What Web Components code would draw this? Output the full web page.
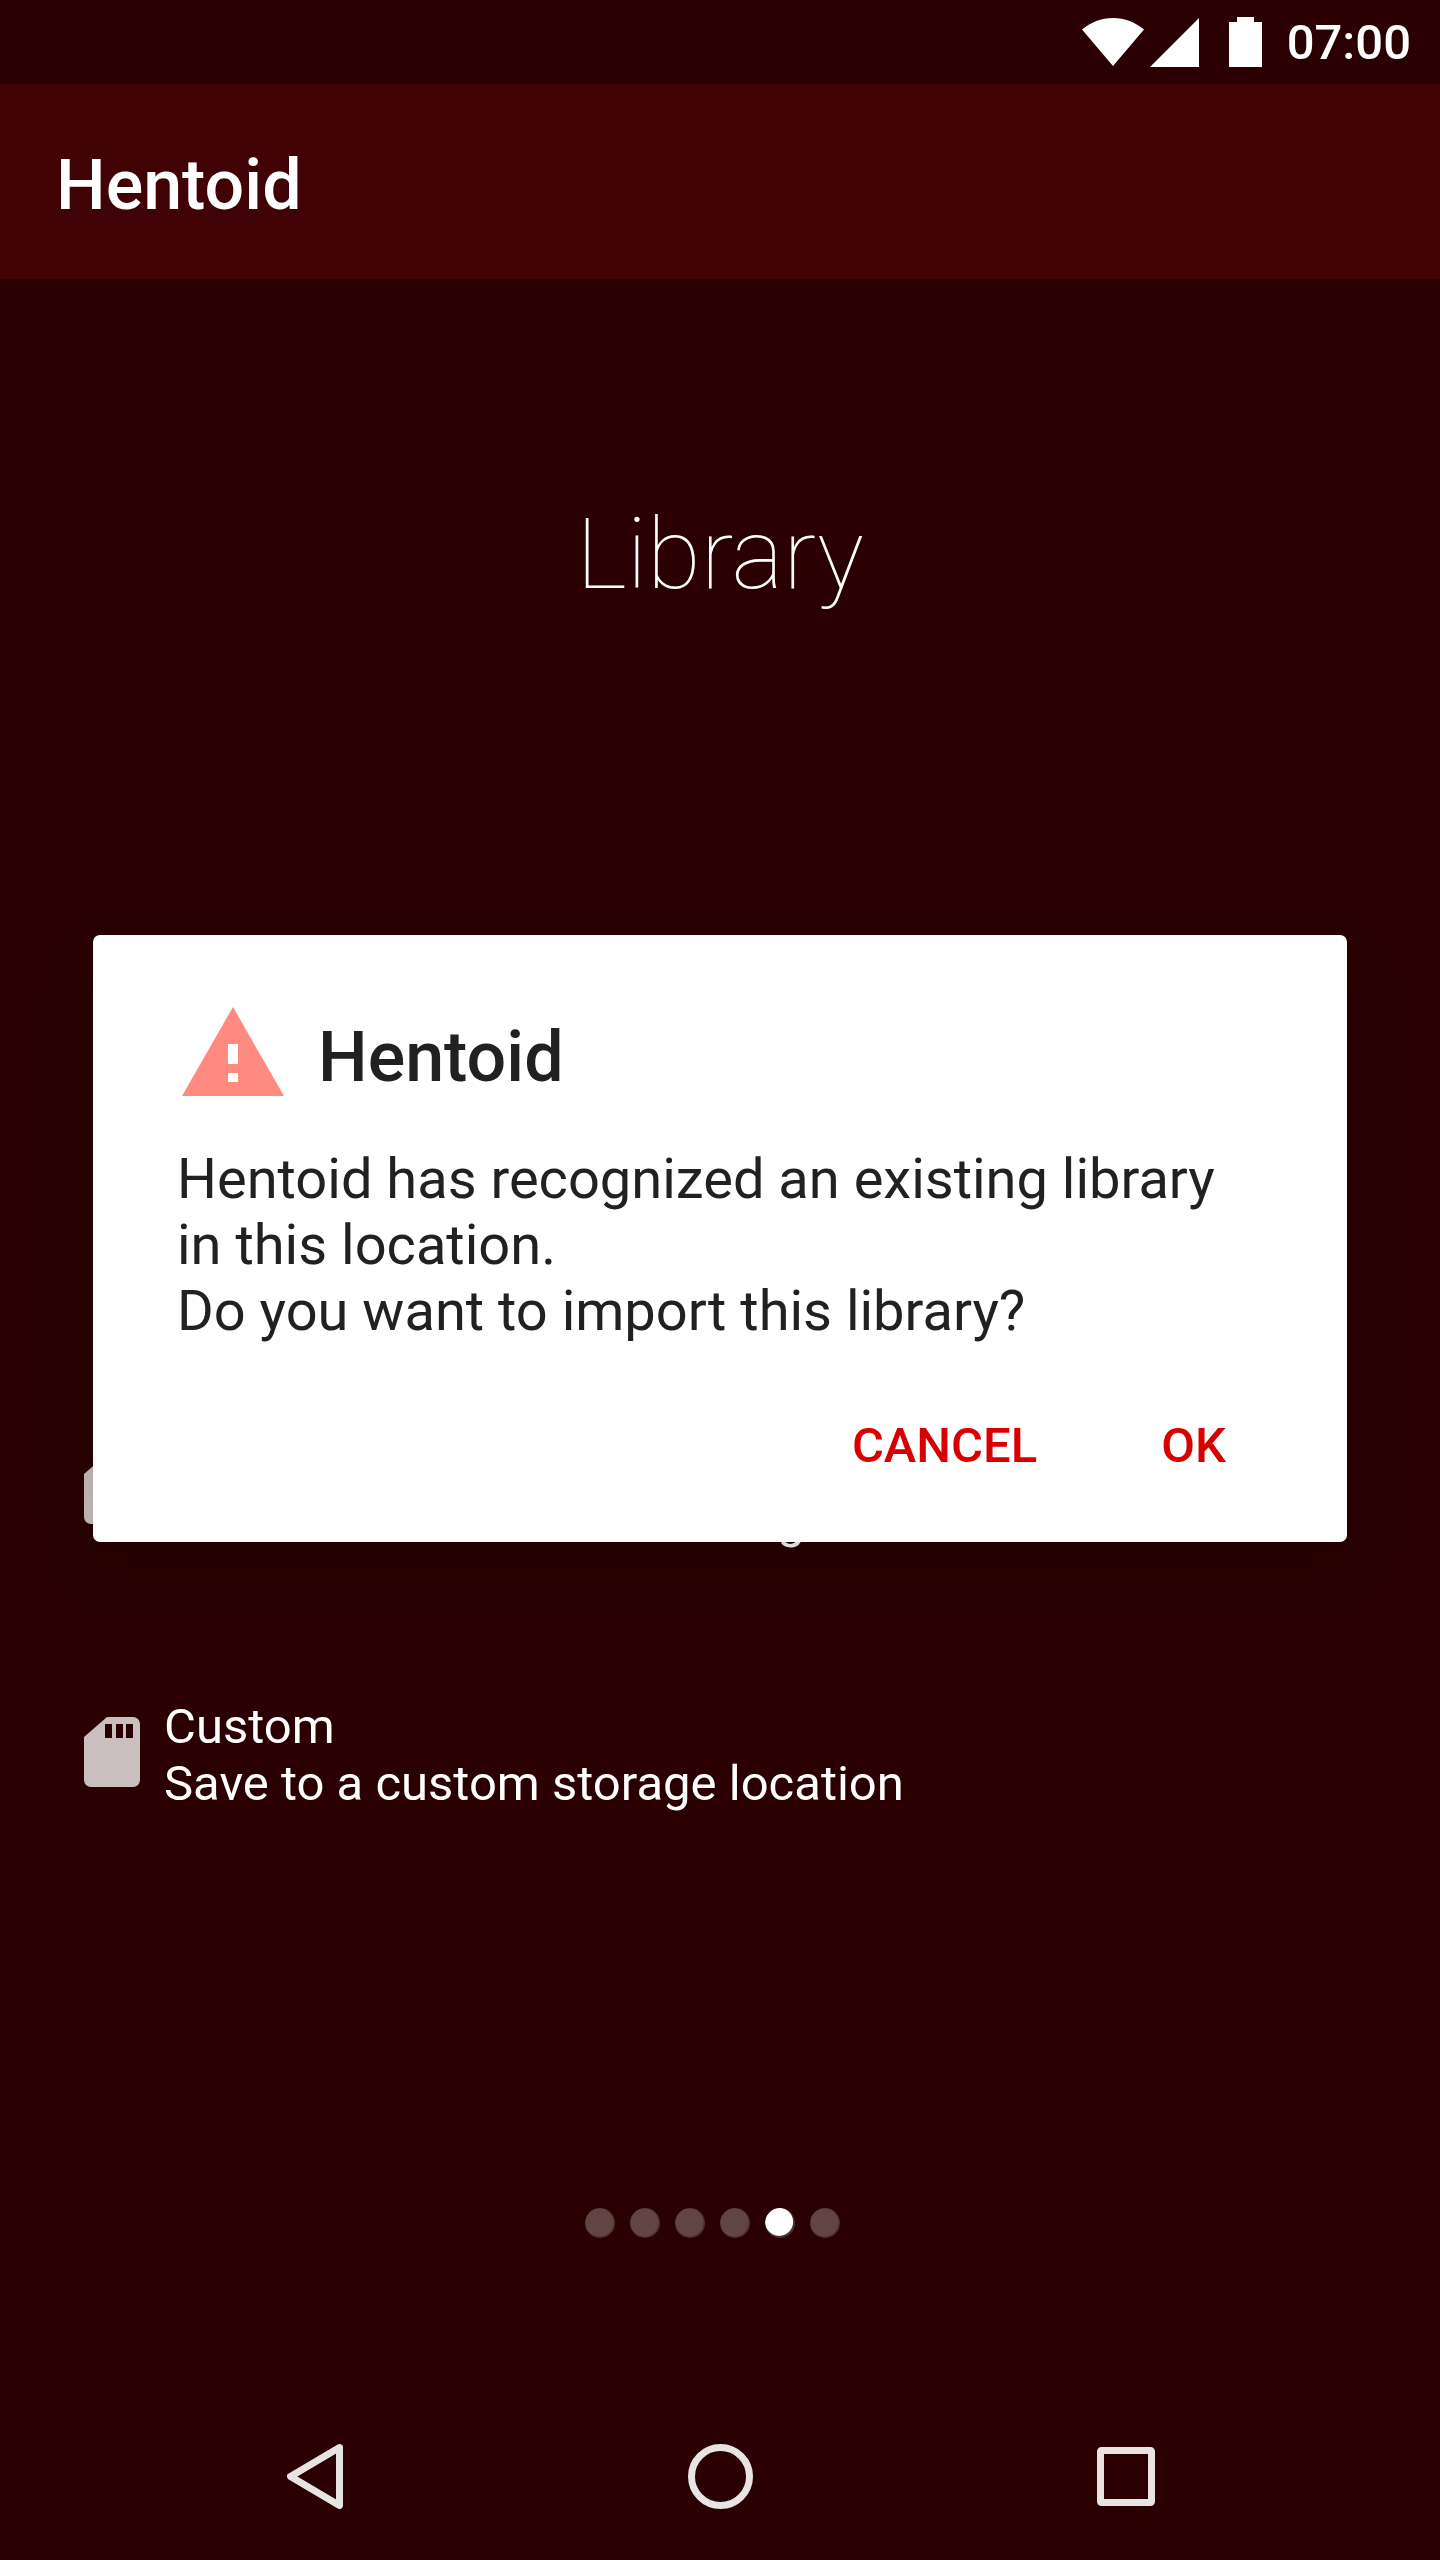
<!DOCTYPE html>
<html lang="en">
<head>
<meta charset="utf-8">
<title>Hentoid</title>
<style>
    html, body { margin: 0; padding: 0; background: #2a0002; }
    body { font-family: Roboto, "Liberation Sans", sans-serif; }
</style>
</head>
<body>
<setup-screen>
    <status-bar slot="top" time="07:00"></status-bar>
    <app-toolbar slot="top">Hentoid</app-toolbar>
    <h1 slot="heading">Library</h1>
    <storage-option>
        <span slot="name">Device</span>
        <span slot="hint">Save to the internal SD storage</span>
    </storage-option>
    <storage-option>
        <span slot="name">Custom</span>
        <span slot="hint">Save to a custom storage location</span>
    </storage-option>
    <page-dots slot="dots" count="6" active="4"></page-dots>
    <nav-bar slot="nav"></nav-bar>
    <alert-dialog slot="overlay" heading="Hentoid">
        Hentoid has recognized an existing library<br>in this location.<br>Do you want to import this library?
        <dialog-button slot="actions">CANCEL</dialog-button>
        <dialog-button slot="actions">OK</dialog-button>
    </alert-dialog>
</setup-screen>

<script>
class SetupScreen extends HTMLElement {
    constructor() {
        super();
        this.attachShadow({mode: 'open'});
    }
    connectedCallback() {
        this.shadowRoot.innerHTML = `
        <style>
        :host {
            display: flex;
            flex-direction: column;
            position: relative;
            width: 1440px;
            height: 2560px;
            overflow: hidden;
            background: #2a0002;
            color: #fff;
        }
        main {
            flex: 1;
            display: flex;
            flex-direction: column;
        }
        ::slotted(h1) {
            margin: 218px 0 0;
            text-align: center;
            font: 100 98px/115px Roboto, sans-serif;
            color: #fff;
        }
        .options {
            display: flex;
            flex-direction: column;
            gap: 143px;
            margin-top: 817px;
            padding-left: 84px;
        }
        .scrim {
            position: absolute;
            left: 93px;
            top: 935px;
        }
        </style>
        <slot name="top"></slot>
        <main>
            <slot name="heading"></slot>
            <div class="options"><slot></slot></div>
            <slot name="dots"></slot>
        </main>
        <slot name="nav"></slot>
        <div class="scrim"><slot name="overlay"></slot></div>`;
    }
}

class StatusBar extends HTMLElement {
    constructor() {
        super();
        this.attachShadow({mode: 'open'});
    }
    connectedCallback() {
        this.shadowRoot.innerHTML = `
        <style>
        :host {
            display: flex;
            align-items: center;
            justify-content: flex-end;
            height: 84px;
            padding-right: 29px;
            background: #2a0002;
            color: #fff;
            font: 500 49px/84px Roboto, sans-serif;
        }
        svg { display: block; fill: #fff; }
        .wifi { margin-right: 6px; }
        .signal { margin-right: 30px; }
        .battery { margin-right: 25px; }
        span { padding-top: 2px; }
        </style>
        <svg class="wifi" width="62" height="48" viewBox="0 0 62 48"><path d="M31 48 0 11.500C8.500 4.300 19.300 0 31 0s22.500 4.300 31 11.500z"/></svg>
        <svg class="signal" width="49" height="49" viewBox="0 0 49 49"><path d="M0 49 49 0v49z"/></svg>
        <svg class="battery" width="33" height="50" viewBox="0 0 33 50"><path d="M8 0h17v5h8v45H0V5h8z"/></svg>
        <span>${this.getAttribute('time')}</span>`;
    }
}

class AppToolbar extends HTMLElement {
    constructor() {
        super();
        this.attachShadow({mode: 'open'});
    }
    connectedCallback() {
        this.shadowRoot.innerHTML = `
        <style>
        :host {
            display: flex;
            align-items: center;
            box-sizing: border-box;
            height: 195px;
            padding: 6px 0 0 56px;
            background: #400204;
            color: #fff;
            font: 500 70px/82px Roboto, sans-serif;
        }
        </style>
        <slot></slot>`;
    }
}

class StorageOption extends HTMLElement {
    constructor() {
        super();
        this.attachShadow({mode: 'open'});
    }
    connectedCallback() {
        this.shadowRoot.innerHTML = `
        <style>
        :host {
            display: flex;
            align-items: center;
            gap: 24px;
            color: #fff;
            font: 400 49px/57px Roboto, sans-serif;
        }
        svg { display: block; flex: none; fill: #c9bfbf; }
        .text { display: flex; flex-direction: column; margin-top: 6px; }
        </style>
        <svg width="56" height="70" viewBox="0 0 56 70">
            <path fill-rule="evenodd" d="M23 0h26a7 7 0 0 1 7 7v56a7 7 0 0 1-7 7H7a7 7 0 0 1-7-7V20zM21 7v14h7V7zm11 0v14h7V7zm10 0v14h7V7z"/>
        </svg>
        <div class="text">
            <slot name="name"></slot>
            <slot name="hint"></slot>
        </div>`;
    }
}

class PageDots extends HTMLElement {
    constructor() {
        super();
        this.attachShadow({mode: 'open'});
    }
    connectedCallback() {
        const count = Number(this.getAttribute('count'));
        const active = Number(this.getAttribute('active'));
        let dots = '';
        for (let i = 0; i < count; i++) {
            dots += `<i class="${i === active ? 'on' : ''}"></i>`;
        }
        this.shadowRoot.innerHTML = `
        <style>
        :host {
            display: flex;
            justify-content: flex-start;
            gap: 15px;
            margin-top: 396px;
            padding-left: 585px;
        }
        i {
            display: block;
            width: 30px;
            height: 30px;
            border-radius: 50%;
            background: radial-gradient(circle at 48% 48%, #624445 0 13.500px, #4d3031 14.500px);
        }
        i.on {
            background: radial-gradient(circle at 47% 46%, #fff 0 13.500px, #4d3031 14.500px);
        }
        </style>
        ${dots}`;
    }
}

class NavBar extends HTMLElement {
    constructor() {
        super();
        this.attachShadow({mode: 'open'});
    }
    connectedCallback() {
        this.shadowRoot.innerHTML = `
        <style>
        :host {
            display: flex;
            align-items: center;
            justify-content: space-between;
            height: 168px;
            padding: 0 285px 0 287px;
        }
        svg { display: block; fill: none; stroke: #e8e4e4; stroke-width: 7; stroke-linejoin: round; }
        </style>
        <svg width="56" height="65" viewBox="0 0 56 65"><path d="M52.500 3.500 3.500 32.500l49 29z"/></svg>
        <svg width="65" height="65" viewBox="0 0 65 65"><circle cx="32.500" cy="32.500" r="29"/></svg>
        <svg width="58" height="59" viewBox="0 0 58 59"><rect x="3.500" y="3.500" width="51" height="52" rx="1"/></svg>`;
    }
}

class AlertDialog extends HTMLElement {
    constructor() {
        super();
        this.attachShadow({mode: 'open'});
    }
    connectedCallback() {
        this.shadowRoot.innerHTML = `
        <style>
        :host {
            display: block;
            box-sizing: border-box;
            width: 1254px;
            height: 607px;
            padding: 66px 121px 0 84px;
            background: #fff;
            border-radius: 7px;
            box-shadow: 0 24px 60px rgba(0, 0, 0, .18);
            color: #212121;
        }
        header {
            display: flex;
            align-items: center;
            gap: 34px;
            padding-left: 5px;
            font: 500 70px/89px Roboto, sans-serif;
        }
        header span { margin-top: 12px; }
        svg { display: block; flex: none; }
        .message {
            margin-top: 44px;
            font: 400 56px/66px Roboto, sans-serif;
        }
        .actions {
            display: flex;
            justify-content: flex-end;
            gap: 124px;
            margin-top: 73px;
        }
        </style>
        <header>
            <svg width="102" height="89" viewBox="0 0 102 89">
                <path fill="#ff8a80" d="M51 0 102 89H0z"/>
                <path fill="#fff" d="M46 37h10v20H46zM46 66h10v9H46z"/>
            </svg>
            <span>${this.getAttribute('heading')}</span>
        </header>
        <div class="message"><slot></slot></div>
        <div class="actions"><slot name="actions"></slot></div>`;
    }
}

class DialogButton extends HTMLElement {
    constructor() {
        super();
        this.attachShadow({mode: 'open'});
    }
    connectedCallback() {
        this.shadowRoot.innerHTML = `
        <style>
        :host {
            display: block;
            color: #d80000;
            font: 500 49px/57px Roboto, sans-serif;
        }
        </style>
        <slot></slot>`;
    }
}

customElements.define('setup-screen', SetupScreen);
customElements.define('status-bar', StatusBar);
customElements.define('app-toolbar', AppToolbar);
customElements.define('storage-option', StorageOption);
customElements.define('page-dots', PageDots);
customElements.define('nav-bar', NavBar);
customElements.define('alert-dialog', AlertDialog);
customElements.define('dialog-button', DialogButton);
</script>
</body>
</html>
